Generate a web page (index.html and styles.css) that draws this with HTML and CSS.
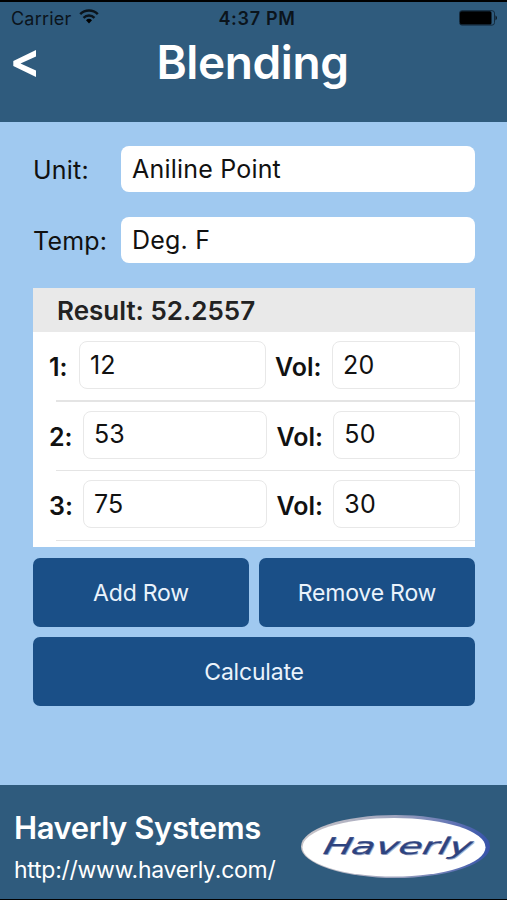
FILE: index.html
```html
<!DOCTYPE html>
<html lang="en">

<head>
    <meta charset="UTF-8">
    <meta name="viewport" content="width=device-width, initial-scale=1.0">
    <title>Blending</title>
    <link rel="stylesheet" href="styles.css">
</head>

<body>
    <div class="screen">
        <header class="header">
            <div class="status-bar">
                <div class="carrier">
                    <span>Carrier</span>
                    <svg class="wifi" width="20" height="15" viewBox="0 0 20 15">
                        <path d="M1.2 5.2a12.6 12.6 0 0 1 17.6 0" fill="none" stroke="#0b141c" stroke-width="2.5" />
                        <path d="M4.5 8.8a7.9 7.9 0 0 1 11 0" fill="none" stroke="#0b141c" stroke-width="2.4" />
                        <path d="M10 14.500l-3-3.3a4.4 4.4 0 0 1 6 0z" />
                    </svg>
                </div>
                <span class="time">4:37 PM</span>
                <svg class="battery" width="39" height="16" viewBox="0 0 39 16">
                    <rect x=".5" y=".7" width="35" height="14.4" rx="2.4" fill="none" stroke="#142b3e" />
                    <rect x="1" y="1.2" width="31.5" height="13.4" rx="1.6" />
                    <path d="M36.6 5.2q2.3 2.7 0 5.4z" />
                </svg>
            </div>
            <div class="title-bar">
                <a class="back" href="#" aria-label="Back">
                    <svg width="24" height="30" viewBox="0 0 24 30">
                        <path d="M23 1v6.500L7.500 14.500 23 21.500V28L.3 17v-5z" fill="#fff" />
                    </svg>
                </a>
                <h1>Blending</h1>
            </div>
        </header>

        <main class="content">
            <div class="field">
                <label for="unit">Unit:</label>
                <input type="text" id="unit" value="Aniline Point">
            </div>
            <div class="field">
                <label for="temp">Temp:</label>
                <input type="text" id="temp" value="Deg. F">
            </div>

            <div class="table">
                <div class="result">Result: 52.2557</div>
                <div class="row first">
                    <span class="index">1:</span>
                    <input type="text" class="value" value="12">
                    <span class="vol-label">Vol:</span>
                    <input type="text" class="vol" value="20">
                </div>
                <div class="row">
                    <span class="index">2:</span>
                    <input type="text" class="value" value="53">
                    <span class="vol-label">Vol:</span>
                    <input type="text" class="vol" value="50">
                </div>
                <div class="row">
                    <span class="index">3:</span>
                    <input type="text" class="value" value="75">
                    <span class="vol-label">Vol:</span>
                    <input type="text" class="vol" value="30">
                </div>
            </div>

            <div class="buttons">
                <button>Add Row</button>
                <button>Remove Row</button>
                <button class="calculate">Calculate</button>
            </div>
        </main>

        <footer class="footer">
            <div class="company">
                <div class="name">Haverly Systems</div>
                <div class="link">http://www.haverly.com/</div>
            </div>
            <svg class="logo" width="192" height="66" viewBox="0 0 192 66">
                <defs>
                    <linearGradient id="rim" x1="0" y1="0" x2="1" y2="0">
                        <stop offset="0" stop-color="#c9c5c8" />
                        <stop offset=".5" stop-color="#9da3bd" />
                        <stop offset=".8" stop-color="#6375b5" />
                        <stop offset="1" stop-color="#3552a8" />
                    </linearGradient>
                </defs>
                <ellipse cx="95.500" cy="32.500" rx="94.500" ry="31.500" fill="url(#rim)" />
                <ellipse cx="94" cy="33.300" rx="91.500" ry="29.300" fill="#fff" />
                <text class="logo-shadow" transform="translate(20.500 41) skewX(-28)" textLength="149" lengthAdjust="spacingAndGlyphs">Haverly</text>
                <text class="logo-text" transform="translate(19.500 40) skewX(-28)" textLength="149" lengthAdjust="spacingAndGlyphs">Haverly</text>
            </svg>
        </footer>
    </div>
</body>

</html>
```
FILE: styles.css
```css
* {
    box-sizing: border-box;
}

body {
    margin: 0;
    font-family: Inter, "Liberation Sans", sans-serif;
    font-feature-settings: "calt" 0;
    color: #111;
}

.screen {
    display: flex;
    flex-direction: column;
    height: 900px;
    background-color: #a0c9f0;
    border-top: 2px solid #000;
    border-bottom: 1px solid #000;
    overflow: hidden;
}

.header {
    height: 120px;
    background-color: #2f5b7d;
}

.status-bar {
    display: grid;
    grid-template-columns: 1fr auto 1fr;
    align-items: center;
    height: 32px;
    padding: 0 9px 0 11px;
    color: #0b141c;
    font-size: 18px;
}

.carrier {
    display: flex;
    align-items: center;
    gap: 8px;
    letter-spacing: 0.2px;
}

.wifi {
    margin-bottom: 3px;
}

.time {
    padding-left: 5px;
    font-weight: 600;
    letter-spacing: 0.7px;
}

.battery {
    justify-self: end;
}

.title-bar {
    display: grid;
    grid-template-columns: 59px 1fr 61px;
    align-items: center;
    height: 56px;
}

.back {
    display: flex;
    padding: 4px 0 0 13px;
}

h1 {
    margin: 0;
    text-align: center;
    font-size: 46px;
    font-weight: 600;
    letter-spacing: -0.4px;
    line-height: 56px;
    color: #fff;
}

.content {
    flex: 1;
    padding: 24px 32px 0 33px;
}

.field {
    display: flex;
    align-items: center;
    height: 46px;
    margin-bottom: 25px;
    font-size: 25px;
    letter-spacing: 0.2px;
}

.field label {
    width: 88px;
    padding-top: 2px;
}

input {
    min-width: 0;
    border: 1px solid #e8e8e8;
    border-radius: 8px;
    background-color: #fff;
    color: #111;
    font-family: inherit;
    font-feature-settings: inherit;
    font-size: 25px;
    letter-spacing: 0.2px;
    outline: none;
}

.field input {
    flex: 1;
    height: 46px;
    padding: 0 11px 1px;
    border: none;
}

.table {
    height: 259px;
    background-color: #fff;
}

.result {
    height: 44px;
    padding-left: 24px;
    background-color: #e9e9e9;
    color: #222;
    font-size: 26px;
    font-weight: 600;
    line-height: 46px;
}

.row {
    display: flex;
    align-items: center;
    height: 69.5px;
    padding: 0 15px 3px 16px;
    background: linear-gradient(#e4e4e4, #e4e4e4) 23px 100% / 100% 1px no-repeat;
    font-size: 25px;
    font-weight: 600;
}

.row input {
    height: 48px;
    padding: 0 10px 1px;
}

.index {
    width: 34px;
    padding-top: 4px;
}

.value {
    width: 185px;
}

.vol-label {
    width: 66px;
    padding: 4px 0 0 9px;
}

.vol {
    width: 127px;
}

.first {
    background-size: 100% 2px;
}

.first .index {
    width: 30px;
}

.first .value {
    width: 187px;
}

.first .vol {
    width: 128px;
}

.buttons {
    display: grid;
    grid-template-columns: 1fr 1fr;
    gap: 10px;
    margin-top: 11px;
}

button {
    height: 69px;
    padding: 1px 0 0;
    border: none;
    border-radius: 7px;
    background-color: #1a4f87;
    color: #eaf3fc;
    font-family: inherit;
    font-size: 23px;
    letter-spacing: -0.2px;
    cursor: pointer;
}

.calculate {
    grid-column: 1 / 3;
}

.footer {
    display: flex;
    justify-content: space-between;
    height: 114px;
    padding: 0 15px 0 14px;
    background-color: #2f5b7d;
    color: #fff;
    white-space: nowrap;
}

.company {
    width: 270px;
    padding-top: 24px;
}

.name {
    font-size: 31px;
    font-weight: 600;
    letter-spacing: -0.4px;
    line-height: 38px;
}

.link {
    margin-top: 9px;
    font-size: 23px;
    letter-spacing: -0.26px;
    line-height: 28px;
}

.logo {
    margin-top: 29px;
}

.logo text {
    font-family: "DejaVu Sans", sans-serif;
    font-size: 23px;
    stroke-width: 0.3px;
}

.logo-shadow {
    fill: #a5afcb;
}

.logo-text {
    fill: #2d437f;
    stroke: #2d437f;
}
```
